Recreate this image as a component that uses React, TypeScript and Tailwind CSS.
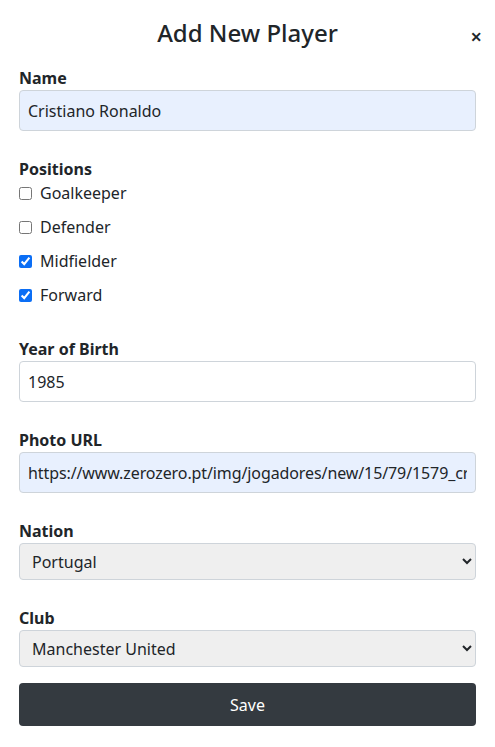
import { useState } from 'react';

const positions = [
  { id: 'gk', label: 'Goalkeeper', checked: false },
  { id: 'df', label: 'Defender', checked: false },
  { id: 'mf', label: 'Midfielder', checked: true },
  { id: 'fw', label: 'Forward', checked: true },
];

const font = 'font-["Noto_Sans","Open_Sans",sans-serif]';

function Label({ children, htmlFor }: { children: string; htmlFor?: string }) {
  return (
    <label htmlFor={htmlFor} className="block h-6 leading-6 text-base font-bold text-[#212529]">
      {children}
    </label>
  );
}

export default function App() {
  const [checks, setChecks] = useState(positions.map((p) => p.checked));

  return (
    <div className={`w-[495px] h-[747px] bg-white text-[#212529] ${font} px-[19px]`}>
      <div className="relative h-[66px] pt-[18px]">
        <h2 className="text-center text-[24px] leading-[30px] font-medium">Add New Player</h2>
        <button className="absolute right-[-6px] top-[28px] text-[20px] leading-[18px] font-semibold text-[#212529]">×</button>
      </div>

      <Label htmlFor="name">Name</Label>
      <input
        id="name"
        defaultValue="Cristiano Ronaldo"
        className="block w-full h-[41px] px-[8px] bg-[#e8f0fe] border border-[#ced4da] rounded text-base outline-none"
      />

      <div className="mt-[26px]">
        <Label>Positions</Label>
        <div className="flex flex-col gap-[10px]">
          {positions.map((p, i) => (
            <label key={p.id} className="flex items-center h-6 gap-[8px] text-base">
              <input
                type="checkbox"
                checked={checks[i]}
                onChange={() => setChecks(checks.map((c, j) => (j === i ? !c : c)))}
                className="w-[13px] h-[13px] accent-[#0b6ef5]"
              />
              {p.label}
            </label>
          ))}
        </div>
      </div>

      <div className="mt-[30px]">
        <Label htmlFor="yob">Year of Birth</Label>
        <input
          id="yob"
          defaultValue="1985"
          className="block w-full h-[41px] px-[8px] bg-white border border-[#ced4da] rounded text-base outline-none"
        />
      </div>

      <div className="mt-[26px]">
        <Label htmlFor="photo">Photo URL</Label>
        <input
          id="photo"
          defaultValue="https://www.zerozero.pt/img/jogadores/new/15/79/1579_cristiano_ronaldo_20230101.jpg"
          className="block w-full h-[41px] px-[8px] bg-[#e8f0fe] border border-[#ced4da] rounded text-base tracking-[-0.1px] outline-none"
        />
      </div>

      <div className="mt-[26px]">
        <Label htmlFor="nation">Nation</Label>
        <select
          id="nation"
          defaultValue="Portugal"
          className="block w-full h-[37px] pl-[8px] pr-[4px] bg-[#efefef] border border-[#ced4da] rounded text-base"
        >
          <option>Portugal</option>
          <option>Spain</option>
          <option>Argentina</option>
        </select>
      </div>

      <div className="mt-[26px]">
        <Label htmlFor="club">Club</Label>
        <select
          id="club"
          defaultValue="Manchester United"
          className="block w-full h-[37px] pl-[8px] pr-[4px] bg-[#efefef] border border-[#ced4da] rounded text-base"
        >
          <option>Manchester United</option>
          <option>Real Madrid</option>
          <option>Al Nassr</option>
        </select>
      </div>

      <button className="mt-[16px] w-full h-[43px] bg-[#343a40] text-white rounded text-base">Save</button>
    </div>
  );
}
